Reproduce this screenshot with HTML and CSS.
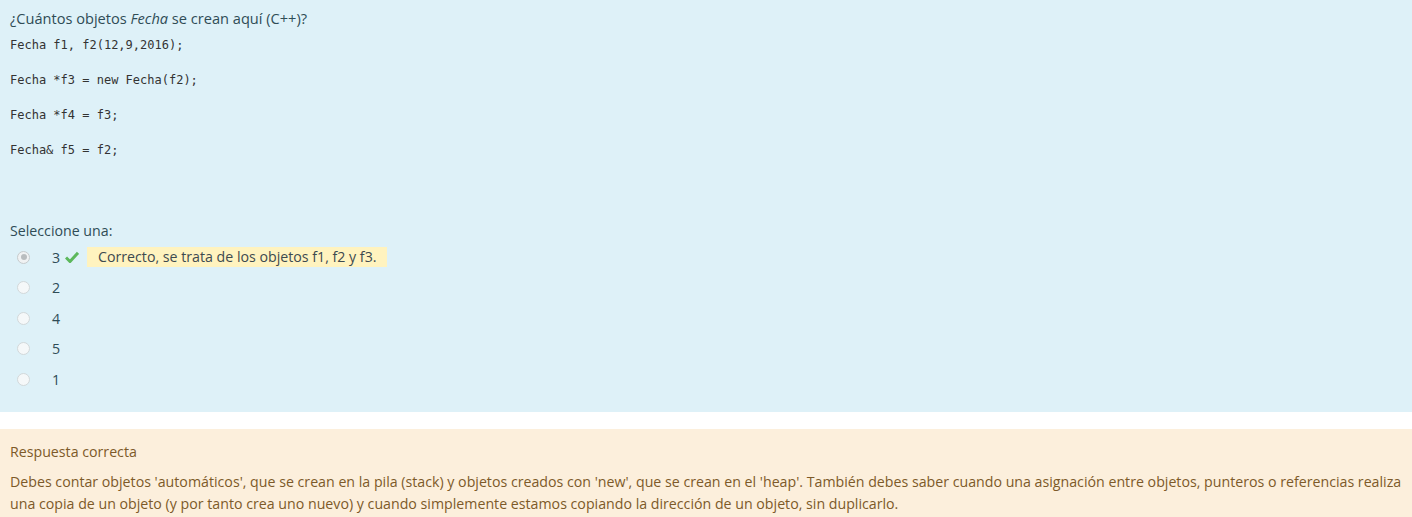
FILE: index.html
```html
<!DOCTYPE html>
<html lang="es">
<head>
<meta charset="utf-8">
<link rel="stylesheet" href="styles.css">
</head>
<body>
<div class="que">
  <div class="formulation">
    <div class="qtext">
      <p class="title">¿Cuántos objetos <em>Fecha</em> se crean aquí (C++)?</p>
      <p class="code">Fecha f1, f2(12,9,2016);</p>
      <p class="code">Fecha *f3 = new Fecha(f2);</p>
      <p class="code">Fecha *f4 = f3;</p>
      <p class="code">Fecha&amp; f5 = f2;</p>
    </div>
    <div class="ablock">
      <div class="prompt">Seleccione una:</div>
      <div class="answer">
        <div class="opt">
          <span class="radio checked"></span>
          <span class="label">3</span>
          <svg class="tick" width="14" height="12" viewBox="0 0 14 12"><path d="M1 6.5 L5 10.5 L13 1.8" fill="none" stroke="#5cb85c" stroke-width="3" stroke-linejoin="miter"/></svg>
          <span class="feedback">Correcto, se trata de los objetos f1, f2 y f3.</span>
        </div>
        <div class="opt"><span class="radio"></span><span class="label">2</span></div>
        <div class="opt"><span class="radio"></span><span class="label">4</span></div>
        <div class="opt"><span class="radio"></span><span class="label">5</span></div>
        <div class="opt"><span class="radio"></span><span class="label">1</span></div>
      </div>
    </div>
  </div>
  <div class="outcome">
    <div class="rightanswer">Respuesta correcta</div>
    <div class="general">Debes contar objetos 'automáticos', que se crean en la pila (stack) y objetos creados con 'new', que se crean en el 'heap'. También debes saber cuando una asignación entre objetos, punteros o referencias realiza una copia de un objeto (y por tanto crea uno nuevo) y cuando simplemente estamos copiando la dirección de un objeto, sin duplicarlo.</div>
  </div>
</div>
</body>
</html>
```

FILE: styles.css
```css
html, body {
  margin: 0;
  padding: 0;
  background: #ffffff;
}
body {
  font-family: "Open Sans", "Noto Sans", sans-serif;
  font-size: 14.2px;
}
.que {
  display: flex;
  flex-direction: column;
  gap: 17px;
}
.formulation {
  background: #def1f8;
  color: #2f4c56;
  padding: 8px 10px 20px 10px;
  height: 384px;
}
.qtext p {
  margin: 0;
}
.title {
  font-size: 14.6px;
  line-height: 20px;
  margin-bottom: 10px !important;
}
.title em {
  font-style: italic;
}
.code {
  font-family: "DejaVu Sans Mono", "Liberation Mono", monospace;
  font-size: 12px;
  color: #333;
  line-height: 15px;
  margin-bottom: 20px !important;
}
.ablock {
  margin-top: 63px;
}
.prompt {
  font-size: 14.2px;
  line-height: 20px;
  margin-bottom: 6px;
}
.answer {
  display: flex;
  flex-direction: column;
  gap: 10.5px;
}
.opt {
  display: flex;
  align-items: center;
  height: 20px;
  font-size: 14.2px;
}
.radio {
  box-sizing: border-box;
  width: 13px;
  height: 13px;
  border-radius: 50%;
  border: 1px solid #d2d8da;
  background: #f5f8f9;
  margin-left: 7px;
  margin-right: 22px;
  position: relative;
}
.radio.checked {
  border-color: #c6cbcd;
  background: #f0f2f3;
}
.radio.checked::after {
  content: "";
  position: absolute;
  left: 2.5px;
  top: 2.5px;
  width: 6px;
  height: 6px;
  border-radius: 50%;
  background: #b9bdbf;
}
.label {
  width: 9px;
}
.tick {
  margin-left: 4px;
}
.feedback {
  margin-left: 8px;
  background: #fff3bf;
  color: #3d4a4f;
  padding: 0 11px;
  line-height: 20px;
}
.outcome {
  background: #fcefdc;
  color: #7d5a29;
  padding: 12px 10px 6px 10px;
  font-size: 14.2px;
  line-height: 22px;
}
.rightanswer {
  margin-bottom: 8px;
}
```
